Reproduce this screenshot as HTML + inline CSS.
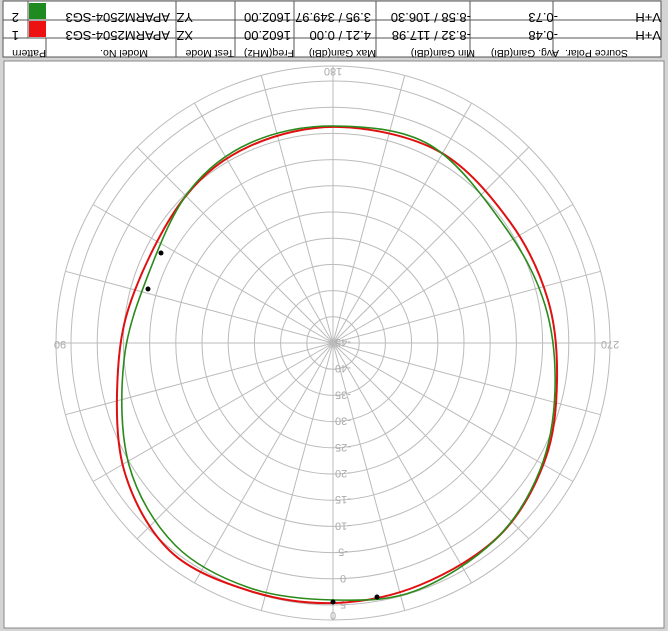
<!DOCTYPE html>
<html><head><meta charset="utf-8"><style>
html,body{margin:0;padding:0;background:#fff;width:668px;height:631px;overflow:hidden;font-family:"Liberation Sans",sans-serif}
</style></head><body>
<svg width="668" height="631" viewBox="0 0 668 631" xmlns="http://www.w3.org/2000/svg">
<rect x="0" y="0" width="668" height="631" fill="#d4d4d4"/>
<rect x="3" y="1" width="658" height="56" fill="#fff" stroke="#555"/>
<g stroke="#555" stroke-width="1">
<line x1="3" y1="20" x2="661" y2="20"/><line x1="3" y1="38" x2="661" y2="38"/>
<line x1="46" y1="38" x2="46" y2="57"/>
<line x1="28" y1="1" x2="28" y2="38"/>
<line x1="176" y1="1" x2="176" y2="57"/><line x1="235" y1="1" x2="235" y2="57"/>
<line x1="294" y1="1" x2="294" y2="57"/><line x1="376" y1="1" x2="376" y2="57"/>
<line x1="470" y1="1" x2="470" y2="57"/><line x1="553" y1="1" x2="553" y2="57"/>
</g>
<rect x="29" y="3" width="17" height="16" fill="#1f8a1f"/>
<rect x="29" y="21" width="17" height="16" fill="#ee1111"/>
<g transform="rotate(180 334 29)" font-size="13" fill="#000">
<text x="649" y="45">2</text><text x="649" y="27">1</text>
<text x="498" y="45">APARM2504-SG3</text><text x="498" y="27">APARM2504-SG3</text>
<text x="475" y="45">YZ</text><text x="475" y="27">XZ</text>
<text x="377" y="45">1602.00</text><text x="377" y="27">1602.00</text>
<text x="297" y="45">3.95 / 349.97</text><text x="297" y="27">4.21 / 0.00</text>
<text x="197" y="45">-8.58 / 106.30</text><text x="197" y="27">-8.32 / 117.98</text>
<text x="110" y="45">-0.73</text><text x="110" y="27">-0.48</text>
<text x="7" y="45">V+H</text><text x="7" y="27">V+H</text>
<g font-size="10.5"><text x="622" y="8">Pattern</text><text x="520" y="8">Model No.</text>
<text x="434" y="8">Test Mode</text><text x="374" y="8">Freq(MHz)</text><text x="292" y="8">Max Gain(dBi)</text>
<text x="193" y="8">Min Gain(dBi)</text><text x="109" y="8">Avg. Gain(dBi)</text><text x="40" y="8">Source Polar.</text></g>
</g>
<rect x="4" y="61" width="660" height="567" fill="#fff" stroke="#888"/>
<g fill="none" stroke="#bbb" stroke-width="1" id="grid"></g>
<g id="lbl" fill="#aaa" font-size="11" text-anchor="middle"></g>
<path id="red" fill="none" stroke="#e01010" stroke-width="2"/>
<path id="grn" fill="none" stroke="#2a8a1a" stroke-width="1.6"/>
<circle cx="161" cy="253" r="2.5" fill="#000"/><circle cx="148" cy="289" r="2.5" fill="#000"/>
<circle cx="333" cy="602" r="2.5" fill="#000"/><circle cx="377" cy="597" r="2.5" fill="#000"/>
</svg>
<script>
var NS="http://www.w3.org/2000/svg",cx=333,cy=343,g=document.getElementById('grid'),l=document.getElementById('lbl');
function el(t,a,p){var e=document.createElementNS(NS,t);for(var k in a)e.setAttribute(k,a[k]);p.appendChild(e);return e;}
for(var k=1;k<=10;k++)el('circle',{cx:cx,cy:cy,r:26.2*k},g);
el('circle',{cx:cx,cy:cy,r:277},g);
for(var a=0;a<360;a+=15){var t=a*Math.PI/180;el('line',{x1:cx,y1:cy,x2:cx+277*Math.sin(t),y2:cy+277*Math.cos(t)},g);}
var labs=['-45','-40','-35','-30','-25','-20','-15','-10','-5','0','5'];
for(var i=0;i<labs.length;i++){var y=cy+26.2*i+4;var e=el('text',{x:cx+10,y:y,transform:'rotate(180 '+(cx+10)+' '+(y-4)+')'},l);e.textContent=labs[i];}
[['0',333,616],['180',333,72],['90',60,345],['270',610,345]].forEach(function(s){var e=el('text',{x:s[1],y:s[2]+4,transform:'rotate(180 '+s[1]+' '+s[2]+')'},l);e.textContent=s[0];});
function smooth(p){var n=p.length,d='M'+p[0][0]+','+p[0][1];for(var i=0;i<n;i++){var p0=p[(i-1+n)%n],p1=p[i],p2=p[(i+1)%n],p3=p[(i+2)%n];
d+=' C'+(p1[0]+(p2[0]-p0[0])/6)+','+(p1[1]+(p2[1]-p0[1])/6)+' '+(p2[0]-(p3[0]-p1[0])/6)+','+(p2[1]-(p3[1]-p1[1])/6)+' '+p2[0]+','+p2[1];}return d+'Z';}
document.getElementById('red').setAttribute('d',smooth([[340,127],[440,152],[510,222],[548,300],[557,380],[545,460],[500,535],[420,585],[335,603],[250,591],[170,551],[124,470],[118,370],[135,290],[185,197],[250,146]]));
document.getElementById('grn').setAttribute('d',smooth([[333,126],[430,145],[505,227],[545,305],[555,390],[540,470],[495,540],[415,591],[335,600],[250,588],[175,545],[129,465],[124,360],[150,270],[190,190],[250,143]]));
</script>
</body></html>
